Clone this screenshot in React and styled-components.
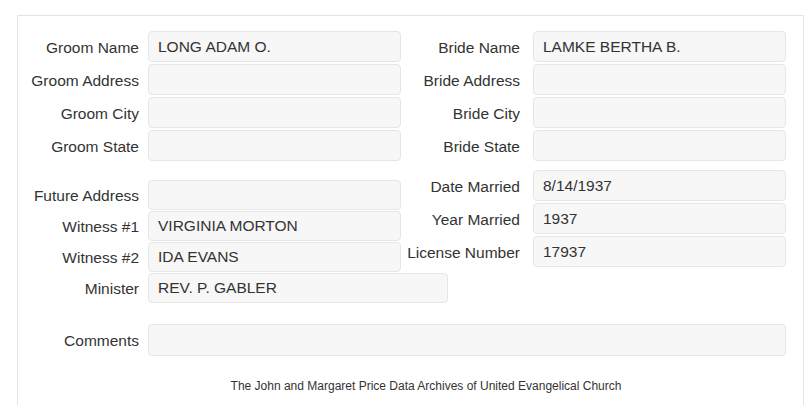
import styled, { createGlobalStyle } from "styled-components";

const GlobalStyle = createGlobalStyle`
  body {
    margin: 0;
    background: #fff;
    font-family: "Liberation Sans", Arial, sans-serif;
    color: #333;
  }
`;

const topLeft = [
  ["Groom Name", "LONG ADAM O."],
  ["Groom Address", ""],
  ["Groom City", ""],
  ["Groom State", ""],
];

const topRight = [
  ["Bride Name", "LAMKE BERTHA B."],
  ["Bride Address", ""],
  ["Bride City", ""],
  ["Bride State", ""],
];

const lowerLeft = [
  ["Future Address", ""],
  ["Witness #1", "VIRGINIA MORTON"],
  ["Witness #2", "IDA EVANS"],
];

const lowerRight = [
  ["Date Married", "8/14/1937"],
  ["Year Married", "1937"],
  ["License Number", "17937"],
];

const Record = ({ label, value, side, wide, height }) => (
  <Row $side={side}>
    <Label>{label}</Label>
    <Field $wide={wide} $height={height}>
      {value}
    </Field>
  </Row>
);

const App = () => {
  return (
    <>
      <GlobalStyle />
      <Panel>
        <Section>
          <Column $gap={2}>
            {topLeft.map(([l, v]) => (
              <Record key={l} label={l} value={v} side="left" />
            ))}
          </Column>
          <Column $gap={2}>
            {topRight.map(([l, v]) => (
              <Record key={l} label={l} value={v} side="right" />
            ))}
          </Column>
        </Section>

        <Section>
          <Column $gap={1} $top={19}>
            {lowerLeft.map(([l, v]) => (
              <Record key={l} label={l} value={v} side="left" height={30} />
            ))}
            <Record label="Minister" value="REV. P. GABLER" side="left" height={30} wide />
          </Column>
          <Column $gap={2} $top={9}>
            {lowerRight.map(([l, v]) => (
              <Record key={l} label={l} value={v} side="right" />
            ))}
          </Column>
        </Section>

        <CommentRow>
          <Label>Comments</Label>
          <Field />
        </CommentRow>

        <Footer>
          The John and Margaret Price Data Archives of United Evangelical Church
        </Footer>
      </Panel>
    </>
  );
};

const Panel = styled.div`
  box-sizing: border-box;
  margin: 15px 0 0 17px;
  width: 787px;
  min-height: 400px;
  border: 1px solid #e3e3e3;
  border-bottom: none;
  padding: 15px 16px 0 0;
`;

const Section = styled.div`
  display: grid;
  grid-template-columns: 383px 385px;
  align-items: start;
`;

const Column = styled.div`
  display: flex;
  flex-direction: column;
  gap: ${(p) => p.$gap}px;
  margin-top: ${(p) => p.$top || 0}px;
`;

const Row = styled.div`
  display: grid;
  grid-template-columns: ${(p) =>
    p.$side === "right" ? "119px 253px" : "121px 253px"};
  column-gap: ${(p) => (p.$side === "right" ? 13 : 9)}px;
  align-items: center;
`;

const Label = styled.div`
  font-size: 15.5px;
  text-align: right;
  white-space: nowrap;
  color: #333;
  padding-top: 2px;
`;

const Field = styled.div`
  box-sizing: border-box;
  width: ${(p) => (p.$wide ? "300px" : "100%")};
  height: ${(p) => p.$height || 31}px;
  background: #f7f7f7;
  border: 1px solid #e6e6e6;
  border-radius: 4px;
  padding: 0 9px;
  display: flex;
  align-items: center;
  font-size: 15.5px;
  color: #333;
  white-space: nowrap;
`;

const CommentRow = styled.div`
  display: grid;
  grid-template-columns: 121px 638px;
  column-gap: 9px;
  align-items: center;
  margin-top: 21px;

  ${Field} {
    height: 32px;
  }
`;

const Footer = styled.div`
  margin-top: 22px;
  padding-left: 47px;
  text-align: center;
  font-size: 12px;
  line-height: 16px;
  color: #333;
`;

export default App;
